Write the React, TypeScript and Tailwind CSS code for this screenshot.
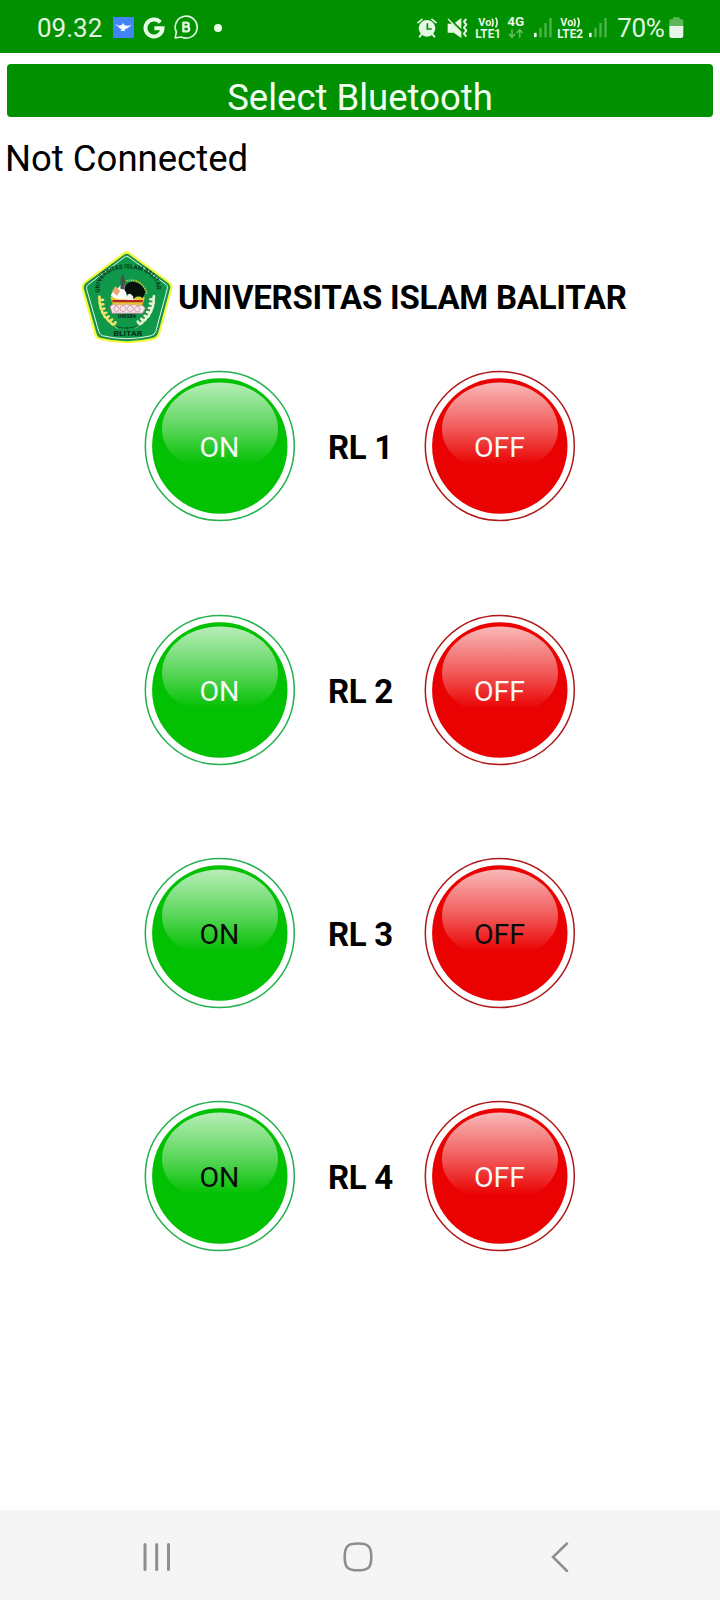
import React from "react";

const BAR_ICON = "shrink-0 overflow-visible fill-[#e6f7e4]";

function AppIcon() {
  return (
    <svg viewBox="0 0 63 63" className="ml-[12px] h-[21px] w-[21px] shrink-0">
      <rect width="63" height="63" rx="3" fill="#4285f4" />
      <path
        d="M8 21 C14 27 22 26 26 24 C28 21 29 20 30 17 C31 20 33 21 34 24 C40 27 48 27 56 23 C50 30 43 34 37 36 L34 39 L38 42 H22 L26 39 L24 36 C18 34 16 27 8 24 Z"
        fill="#f4fbff"
      />
    </svg>
  );
}

function GoogleIcon() {
  return (
    <svg viewBox="0 0 66 66" className="ml-[9px] h-[22px] w-[22px] shrink-0">
      <path d="M52 16 A25.5 25.5 0 1 0 58.5 34 H34" fill="none" stroke="#e6fbe4" strokeWidth="12" />
    </svg>
  );
}

function BusinessChatIcon() {
  return (
    <svg viewBox="0 0 72 74" className="ml-[9px] h-[24.67px] w-[24px] shrink-0">
      <path
        d="M3.5 69 L7 51 A33 33 0 1 1 22 66 Z"
        fill="none"
        stroke="#dff5dc"
        strokeWidth="5"
        strokeLinejoin="round"
      />
      <path
        d="M28 20 V52 M27 23 H38 A6 6 0 0 1 38 35 H28 M38 35 A7 7 0 0 1 39 49 H27"
        fill="none"
        stroke="#dff5dc"
        strokeWidth="7"
      />
    </svg>
  );
}

function AlarmIcon() {
  return (
    <svg viewBox="0 0 60 60" className={`${BAR_ICON} h-[20px] w-[20px]`}>
      <path d="M3 14 L15 4 M57 14 L45 4" stroke="#e6f7e4" strokeWidth="5" strokeLinecap="round" />
      <path d="M14 48 L8 56 M46 48 L52 56" stroke="#e6f7e4" strokeWidth="6" strokeLinecap="round" />
      <circle cx="30" cy="31" r="25" />
      <path d="M31 16 V33 H44" fill="none" stroke="#009000" strokeWidth="5" />
    </svg>
  );
}

function MuteVibrateIcon() {
  return (
    <svg viewBox="0 0 62 60" className={`${BAR_ICON} ml-[10px] h-[20px] w-[20.67px]`}>
      <path d="M2 17 H15 L43 45 V60 L20 44 H2 Z" />
      <path d="M24 14 L43 0 V33 Z" />
      <path d="M4 4 L42 43" stroke="#e6f7e4" strokeWidth="4" strokeLinecap="round" />
      <path
        d="M58 3 L51 11 L58 20 L51 29 L58 38 L51 47 L58 56"
        fill="none"
        stroke="#e6f7e4"
        strokeWidth="6"
        strokeLinejoin="round"
      />
    </svg>
  );
}

function VolteIcon({ line }: { line: 1 | 2 }) {
  return (
    <svg
      viewBox="0 0 80 68"
      className={`${BAR_ICON} h-[22.67px] w-[26.67px] ${line === 1 ? "ml-[7px]" : "ml-[5px]"} font-['Roboto',sans-serif] font-bold`}
    >
      <text x="10" y="31" fontSize="35" textLength="39" lengthAdjust="spacingAndGlyphs">
        Vo
      </text>
      <path
        d="M51 8 Q58 19 51 31 M62 5 Q71 19 62 34"
        fill="none"
        stroke="#e6f7e4"
        strokeWidth="5"
      />
      <text x="1" y="65" fontSize="38" textLength="77" lengthAdjust="spacingAndGlyphs">
        {line === 1 ? "LTE1" : "LTE2"}
      </text>
    </svg>
  );
}

function DataIcon() {
  return (
    <svg
      viewBox="0 0 54 68"
      className={`${BAR_ICON} ml-[5px] h-[22.67px] w-[18px] font-['Roboto',sans-serif] font-bold`}
    >
      <text x="1" y="31" fontSize="39" textLength="51" lengthAdjust="spacingAndGlyphs">
        4G
      </text>
      <path
        d="M15 40 V64 M6 54 L15 64 L24 54 M38 65 V41 M29 51 L38 41 L47 51"
        fill="none"
        stroke="#62bb60"
        strokeWidth="5"
      />
    </svg>
  );
}

function SignalIcon({ className }: { className: string }) {
  return (
    <svg viewBox="0 0 54 60" className={`h-[20px] w-[18px] shrink-0 ${className}`}>
      <rect x="0" y="44" width="8" height="14" rx="3" fill="#f2fff0" />
      <rect x="16" y="29" width="7" height="29" fill="#4fb34c" />
      <rect x="31" y="15" width="7" height="43" fill="#4fb34c" />
      <rect x="46" y="0" width="7" height="58" fill="#4fb34c" />
    </svg>
  );
}

function BatteryIcon() {
  return (
    <svg viewBox="0 0 44 64" className="ml-[5px] h-[21.33px] w-[14.67px] shrink-0">
      <path d="M12 1 H32 V7 H38 Q43 7 43 13 V30 H1 V13 Q1 7 6 7 H12 Z" fill="#5cb85a" />
      <path d="M1 27 H43 V56 Q43 63 36 63 H8 Q1 63 1 56 Z" fill="#eaf5e9" />
    </svg>
  );
}

function StatusBar() {
  return (
    <header className="flex h-[53px] shrink-0 items-center justify-between bg-[#009000] pr-[36px] pl-[37px] text-[26px] text-[#e2f6e0]">
      <div className="flex items-center pt-[2px]">
        <span className="w-[64px] leading-[30px] whitespace-nowrap">09.32</span>
        <AppIcon />
        <GoogleIcon />
        <BusinessChatIcon />
        <span className="ml-[16px] h-[8px] w-[8px] rounded-full bg-[#e8fbe6]" />
      </div>
      <div className="flex items-center pt-[2px]">
        <AlarmIcon />
        <MuteVibrateIcon />
        <VolteIcon line={1} />
        <DataIcon />
        <SignalIcon className="ml-[9px]" />
        <VolteIcon line={2} />
        <SignalIcon className="ml-[6px]" />
        <span className="ml-[10px] w-[47px] leading-[30px] tracking-[-0.4px] whitespace-nowrap">70%</span>
        <BatteryIcon />
      </div>
    </header>
  );
}

const GRAINS = [
  [58, 152, 40],
  [59, 166, 35],
  [62, 180, 30],
  [68, 194, 20],
  [76, 207, 10],
  [87, 218, 0],
  [99, 228, -10],
];

function Wheat({ transform, color }: { transform: string; color: string }) {
  return (
    <g transform={transform}>
      <path d="M55 140 Q52 205 114 240" fill="none" stroke={color} strokeWidth="2" />
      {GRAINS.map(([x, y, r]) => (
        <g key={y} transform={`translate(${x} ${y}) rotate(${r})`} fill={color}>
          <ellipse cx="-5" cy="0" rx="8" ry="4.2" transform="rotate(50)" />
          <ellipse cx="7" cy="1" rx="8" ry="4.2" transform="rotate(-40)" />
        </g>
      ))}
    </g>
  );
}

function UniversityLogo() {
  return (
    <svg
      viewBox="25 20 290 290"
      className="h-[96px] w-[96px] shrink-0 font-['Roboto',sans-serif] font-bold"
    >
      <path
        d="M158 34 Q169 25 180 34 L299 122 Q311 131 306 144 L270 280 Q265 295 250 298 Q169 318 88 298 Q76 295 71 281 L33 144 Q30 130 41 122 Z"
        fill="#f3fb3c"
      />
      <path
        d="M160 41 Q169 34 178 41 L294 126 Q303 133 300 143 L264 277 Q260 289 247 292 Q169 311 92 292 Q82 290 78 278 L40 144 Q37 133 46 126 Z"
        fill="#16904a"
      />
      <path
        d="M162 48 Q169 42 176 48 L289 131 Q294 135 292 142 L257 272 Q254 282 243 285 Q169 303 96 285 Q88 282 85 273 L48 144 Q46 136 52 131 Z"
        fill="#10984a"
        stroke="#e4f7e8"
        strokeWidth="3"
      />
      <path id="logo-arc" d="M89 154 C68 58 274 58 259 154" fill="none" />
      <text fontSize="19" fill="#06391c">
        <textPath href="#logo-arc" textLength="250" lengthAdjust="spacingAndGlyphs">
          UNIVERSITAS ISLAM BALITAR
        </textPath>
      </text>
      <path d="M168 119 Q215 110 230 158" fill="none" stroke="#d9d63a" strokeWidth="5" strokeDasharray="4 3" />
      <path d="M120 168 H224 Q217 201 202 210 H140 Q126 197 120 168 Z" fill="#e8c832" />
      <path d="M126 177 H218 V184 H126 Z" fill="#b32a24" />
      <path d="M121 165 Q127 143 145 139 Q152 125 165 134 L170 172 Q146 182 121 165 Z" fill="#fafafa" />
      <path d="M151 112 L158 98 L165 122 L162 145 L150 143 Z" fill="#435649" />
      <path d="M125 151 L135 135 L149 150 L140 164 Z" fill="#e8a76b" />
      <path
        d="M162 145 Q166 120 191 122 Q216 126 226 153 L217 172 Q205 158 196 169 L188 175 Q181 155 173 165 Z"
        fill="#08100b"
      />
      <path d="M172 161 Q180 153 188 166 L190 177 H165 Z" fill="#f4f4ed" />
      <g fill="#f1e6ea" stroke="#d67991" strokeWidth="2">
        <path d="M119 198 Q127 184 138 195 Q149 184 158 195 Q169 184 181 195 Q193 184 202 196 Q217 187 225 202 L217 217 H125 Z" />
        <circle cx="138" cy="204" r="8" />
        <circle cx="158" cy="203" r="9" />
        <circle cx="180" cy="203" r="9" />
        <circle cx="201" cy="205" r="8" />
      </g>
      <Wheat transform="translate(29 24)" color="#eee46a" />
      <Wheat transform="translate(309 22) scale(-1 1)" color="#eef3d4" />
      <text x="143" y="231" fontSize="16" fill="#0b2415" textLength="55" lengthAdjust="spacingAndGlyphs">
        UNISBA
      </text>
      <path d="M138 257 Q169 268 204 255 M172 258 L169 267" fill="none" stroke="#082e17" strokeWidth="2" />
      <text x="129" y="286" fontSize="24" fill="#082e17" textLength="87" lengthAdjust="spacingAndGlyphs">
        BLITAR
      </text>
    </svg>
  );
}

function RoundButton({ label, kind, dark }: { label: string; kind: "on" | "off"; dark?: boolean }) {
  const on = kind === "on";
  const gloss = on ? "gloss-on" : "gloss-off";
  return (
    <button className="grid h-[152px] w-[152px] shrink-0 place-items-center">
      <svg viewBox="0 0 152 152" className="col-start-1 row-start-1 h-[152px] w-[152px]">
        <defs>
          <linearGradient id={gloss} x1="0" y1="0" x2="0" y2="1">
            <stop offset="0" stopColor="#fff" stopOpacity="0.72" />
            <stop offset="0.5" stopColor="#fff" stopOpacity="0.36" />
            <stop offset="0.93" stopColor="#fff" stopOpacity="0" />
          </linearGradient>
        </defs>
        <circle cx="75.8" cy="76" r="74.5" fill="#fff" stroke={on ? "#22b14c" : "#b01818"} strokeWidth="1.5" />
        <circle cx="75.8" cy="76" r="67.7" fill={on ? "#02c002" : "#ea0202"} />
        <path
          d="M18 59 C18 34 43 12.5 76 12.5 C109 12.5 134 34 134 59 C134 83 111 101 76 101 C41 101 18 83 18 59 Z"
          fill={`url(#${gloss})`}
        />
      </svg>
      <span
        className={`col-start-1 row-start-1 pt-[3px] pr-[1px] text-[28.5px] leading-[32px] ${dark ? "text-[#0a0a0a]" : "text-[#f7f7f7]"}`}
      >
        {label}
      </span>
    </button>
  );
}

const RELAYS = [
  { name: "RL 1", onDark: false, offDark: false },
  { name: "RL 2", onDark: false, offDark: false },
  { name: "RL 3", onDark: true, offDark: true },
  { name: "RL 4", onDark: true, offDark: false },
];

function NavigationBar() {
  return (
    <nav className="flex h-[90px] shrink-0 items-center bg-[#f5f5f5] pt-[3px] pl-[143px]">
      <svg viewBox="0 0 28 30" className="h-[30px] w-[28px]" stroke="#8e8e8e" strokeWidth="3" strokeLinecap="round">
        <path d="M2 2.5 V27.5 M13.7 2.5 V27.5 M25.5 2.5 V27.5" />
      </svg>
      <svg viewBox="0 0 30 30" className="ml-[172px] h-[30px] w-[30px]" fill="none" stroke="#8e8e8e" strokeWidth="2.6">
        <path d="M15 1.5 C25.5 1.5 28.3 4.5 28.3 15 C28.3 25.5 25.5 28.3 15 28.3 C4.5 28.3 1.7 25.5 1.7 15 C1.7 4.5 4.5 1.5 15 1.5 Z" />
      </svg>
      <svg
        viewBox="0 0 18 30"
        className="ml-[178px] h-[30px] w-[18px]"
        fill="none"
        stroke="#8e8e8e"
        strokeWidth="2.5"
        strokeLinecap="round"
      >
        <path d="M16 1.5 L2 15 L16 29" />
      </svg>
    </nav>
  );
}

export default function App() {
  return (
    <div className="flex h-[1600px] w-[720px] flex-col overflow-hidden bg-white font-['Roboto',sans-serif] text-black">
      <StatusBar />
      <main className="flex grow flex-col">
        <button className="mx-[7px] mt-[11px] flex h-[53px] shrink-0 justify-center rounded-[4px] bg-[#009000] pt-[15px] text-[36.5px] leading-[37px] text-[#f3fff2]">
          <span>Select Bluetooth</span>
        </button>
        <p className="mt-[21px] ml-[5px] text-[36.5px] leading-[42px]">Not Connected</p>
        <div className="mt-[68px] ml-[79px] flex items-center">
          <UniversityLogo />
          <h1 className="ml-[3px] pt-[4px] text-[33px] leading-[40px] font-bold tracking-[-0.24px] whitespace-nowrap">
            UNIVERSITAS ISLAM BALITAR
          </h1>
        </div>
        <section className="mt-[26px] ml-[144px] flex flex-col gap-[91px]">
          {RELAYS.map((relay) => (
            <div key={relay.name} className="flex items-center first:mb-px">
              <RoundButton label="ON" kind="on" dark={relay.onDark} />
              <span className="ml-[32px] w-[96px] pt-[4px] text-[33px] leading-[38px] font-bold tracking-[-0.3px]">
                {relay.name}
              </span>
              <RoundButton label="OFF" kind="off" dark={relay.offDark} />
            </div>
          ))}
        </section>
      </main>
      <NavigationBar />
    </div>
  );
}
